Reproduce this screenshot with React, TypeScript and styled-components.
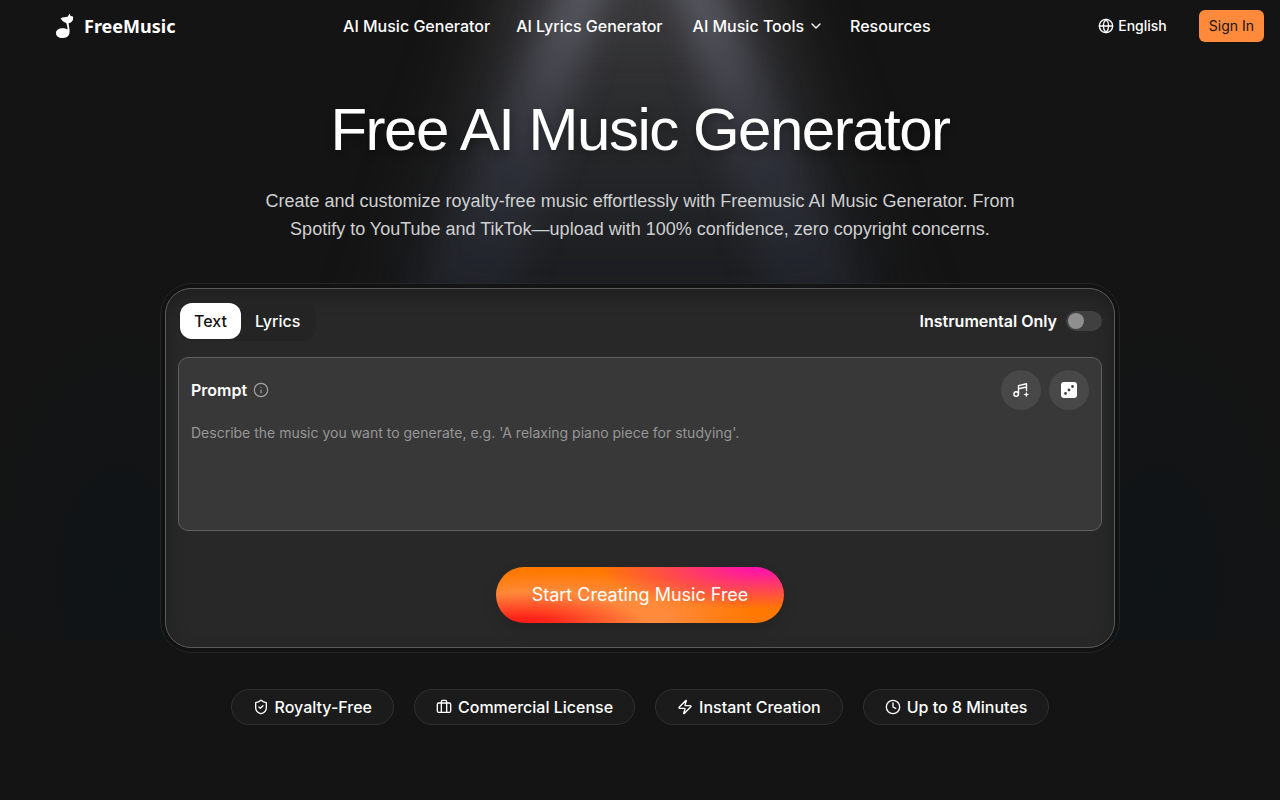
import React, { useState } from "react";
import styled, { createGlobalStyle } from "styled-components";
import {
  Briefcase,
  ChevronDown,
  Clock,
  Globe,
  Info,
  ShieldCheck,
  Zap,
} from "lucide-react";

const ui = `Inter, "Noto Sans", sans-serif`;
const display = `"Liberation Sans", Arial, sans-serif`;

const GlobalStyle = createGlobalStyle`
  *, *::before, *::after { box-sizing: border-box; }
  body {
    margin: 0;
    background: #141414;
    color: #ffffff;
    font-family: ${ui};
  }
  button, input, textarea { font: inherit; color: inherit; }
  button { cursor: pointer; border: 0; padding: 0; }
  h1, p, ul { margin: 0; padding: 0; }
`;

const Page = styled.div`
  position: relative;
  min-height: 100vh;
  overflow: hidden;
`;

const Backdrop = styled.svg`
  position: absolute;
  top: 0;
  left: 0;
  width: 100%;
  height: 640px;
  pointer-events: none;
`;

const Content = styled.div`
  position: relative;
`;

const Header = styled.header`
  display: flex;
  align-items: center;
  justify-content: space-between;
  height: 52px;
  padding: 0 16px 0 56px;
`;

const Logo = styled.a`
  display: flex;
  align-items: center;
  gap: 10px;
  color: #ffffff;
  text-decoration: none;
  font: 700 18px/24px "Noto Sans", sans-serif;
`;

const Nav = styled.nav`
  display: flex;
  align-items: center;
  gap: 26px;
`;

const NavLink = styled.a<{ $menu?: boolean }>`
  display: flex;
  align-items: center;
  gap: 4px;
  padding-left: ${(p) => (p.$menu ? "4px" : "0")};
  color: #ffffff;
  text-decoration: none;
  font-size: 16px;
  line-height: 24px;
  font-weight: 500;
`;

const HeaderActions = styled.div`
  display: flex;
  align-items: center;
  gap: 32px;
`;

const LanguageButton = styled.button`
  display: flex;
  align-items: center;
  gap: 4px;
  background: none;
  font-size: 14px;
  line-height: 20px;
  font-weight: 500;
`;

const SignIn = styled.button`
  height: 32px;
  padding: 0 10px;
  border-radius: 6px;
  background: #ff8a3c;
  color: #141414;
  font-size: 14px;
  line-height: 20px;
`;

const Main = styled.main`
  display: flex;
  flex-direction: column;
  align-items: center;
  padding: 48px 24px;
`;

const Title = styled.h1`
  font: 400 60px/60px ${display};
  letter-spacing: -0.025em;
  text-align: center;
  text-shadow: 0 4px 8px rgba(0, 0, 0, 0.3);
`;

const Intro = styled.p`
  max-width: 768px;
  margin-top: 27px;
  color: #cfd0d2;
  font: 400 18px/28px ${display};
  text-align: center;
`;

const Frame = styled.section`
  width: 100%;
  max-width: 960px;
  margin-top: 40px;
  padding: 4px;
  border: 1px solid #252525;
  border-radius: 32px;
  background: rgba(18, 18, 18, 0.8);
`;

const Card = styled.form`
  display: flex;
  flex-direction: column;
  padding: 12px 12px 24px;
  border: 1px solid #5a5a5a;
  border-radius: 26px;
  background: #282828;
  box-shadow: inset 0 8px 16px rgba(24, 24, 24, 0.5);
`;

const CardTop = styled.div`
  display: flex;
  align-items: center;
  justify-content: space-between;
`;

const Tabs = styled.div`
  display: flex;
  padding: 2px;
  border-radius: 14px;
  background: #242424;
`;

const Tab = styled.button<{ $active: boolean }>`
  height: 36px;
  padding: 0 14px;
  border-radius: 12px;
  background: ${(p) => (p.$active ? "#ffffff" : "transparent")};
  color: ${(p) => (p.$active ? "#141414" : "#ffffff")};
  font-size: 16px;
  line-height: 24px;
  font-weight: 500;
`;

const SwitchLabel = styled.label`
  display: flex;
  align-items: center;
  gap: 9px;
  font-size: 16px;
  line-height: 24px;
  font-weight: 600;
`;

const Switch = styled.input`
  appearance: none;
  display: flex;
  align-items: center;
  width: 36px;
  height: 20px;
  margin: 0;
  padding: 2px;
  border-radius: 10px;
  background: #404040;
  cursor: pointer;

  &::before {
    content: "";
    width: 16px;
    height: 16px;
    border-radius: 50%;
    background: #8f8f8f;
  }

  &:checked {
    justify-content: flex-end;
    background: #ff8a3c;
  }
`;

const PromptBox = styled.div`
  display: flex;
  flex-direction: column;
  margin-top: 16px;
  padding: 12px;
  border: 1px solid #606060;
  border-radius: 10px;
  background: #383838;
`;

const PromptHead = styled.div`
  display: flex;
  align-items: center;
  justify-content: space-between;
`;

const PromptTitle = styled.div`
  display: flex;
  align-items: center;
  gap: 6px;
  font-size: 16px;
  line-height: 24px;
  font-weight: 600;

  svg {
    color: #a3a3a3;
  }
`;

const RoundButtons = styled.div`
  display: flex;
  gap: 8px;
`;

const RoundButton = styled.button`
  display: flex;
  align-items: center;
  justify-content: center;
  width: 40px;
  height: 40px;
  border-radius: 50%;
  background: #484848;
`;

const PromptInput = styled.textarea`
  width: 100%;
  height: 108px;
  padding: 12px 0;
  border: 0;
  outline: 0;
  resize: none;
  background: none;
  font-size: 14px;
  line-height: 22px;

  &::placeholder {
    color: #969696;
    opacity: 1;
  }
`;

const StartButton = styled.button`
  align-self: center;
  height: 56px;
  margin-top: 36px;
  padding: 0 36px;
  border-radius: 28px;
  background:
    radial-gradient(ellipse 56% 75% at 92% 0%, #ff0fb0 0%, rgba(255, 15, 176, 0.85) 18%, rgba(255, 15, 176, 0) 100%),
    radial-gradient(ellipse 42% 60% at 10% 105%, #ff1414 0%, rgba(255, 20, 20, 0.85) 25%, rgba(255, 20, 20, 0) 100%),
    radial-gradient(ellipse 68% 80% at 22% 88%, #ff8a3c 0%, #ff8a3c 55%, #ff7800 100%);
  box-shadow: 0 8px 16px rgba(0, 0, 0, 0.12);
  font-size: 18px;
  line-height: 28px;
`;

const Features = styled.ul`
  display: flex;
  flex-wrap: wrap;
  justify-content: center;
  gap: 20px;
  margin-top: 36px;
  list-style: none;
`;

const Feature = styled.li`
  display: flex;
  align-items: center;
  gap: 6px;
  height: 36px;
  padding: 0 21px;
  border: 1px solid #303030;
  border-radius: 18px;
  background: #1b1b1b;
  font-size: 16px;
  line-height: 24px;
  font-weight: 500;
`;

const StageLights = () => (
  <Backdrop viewBox="0 0 1280 640" preserveAspectRatio="none" aria-hidden="true">
    <defs>
      <linearGradient id="beam" gradientUnits="userSpaceOnUse" x1="0" y1="0" x2="0" y2="400">
        <stop offset="0" stopColor="#8a8a9e" stopOpacity="0.4" />
        <stop offset="0.2" stopColor="#80809a" stopOpacity="0.26" />
        <stop offset="0.4" stopColor="#5a6484" stopOpacity="0.18" />
        <stop offset="0.7" stopColor="#3c4c68" stopOpacity="0.14" />
        <stop offset="1" stopColor="#33405c" stopOpacity="0" />
      </linearGradient>
      <linearGradient id="wash" gradientUnits="userSpaceOnUse" x1="0" y1="0" x2="0" y2="420">
        <stop offset="0" stopColor="#77777c" stopOpacity="0.4" />
        <stop offset="0.3" stopColor="#6c6e76" stopOpacity="0.24" />
        <stop offset="0.65" stopColor="#50586a" stopOpacity="0.16" />
        <stop offset="1" stopColor="#303848" stopOpacity="0" />
      </linearGradient>
      <radialGradient id="side">
        <stop offset="0" stopColor="#0e1518" stopOpacity="0.7" />
        <stop offset="1" stopColor="#0e1518" stopOpacity="0" />
      </radialGradient>
      <filter id="soft" x="-50%" y="-20%" width="200%" height="140%" colorInterpolationFilters="sRGB">
        <feGaussianBlur stdDeviation="16" />
      </filter>
      <filter id="softer" x="-50%" y="-20%" width="200%" height="140%" colorInterpolationFilters="sRGB">
        <feGaussianBlur stdDeviation="36" />
      </filter>
    </defs>
    <ellipse cx="120" cy="580" rx="140" ry="260" fill="url(#side)" />
    <ellipse cx="1160" cy="580" rx="140" ry="260" fill="url(#side)" />
    <path d="M550-100H730L950 440H330Z" fill="url(#wash)" filter="url(#softer)" />
    <g filter="url(#soft)">
      <path d="M586-60H618L486 400H364Z" fill="url(#beam)" />
      <path d="M662-60H694L916 400H794Z" fill="url(#beam)" />
    </g>
  </Backdrop>
);

const LogoMark = () => (
  <svg width="18" height="26" viewBox="0 0 18 26" fill="#fff" aria-hidden="true">
    <path d="M4.500 5.200C6.800 4.400 9.800 4.300 12 3.600L13.400 0.600L14.600 3L17 3.600C17.400 6 17 8.300 14.800 9.400C14 9.800 13.200 9.900 12.600 10.200C12.700 13.500 14.300 16.500 13.400 20.400C12.700 23.600 9.800 25 6.300 25C2.800 25 0 23.100 0 20.200C0 17.200 3 15.300 6.300 15.300C8.300 15.300 10.300 15.800 11.500 16.600C11.600 14 10.900 12 10.200 9.900C7.800 9.200 5.600 7.400 4.500 5.200Z" />
  </svg>
);

const ComposeIcon = () => (
  <svg width="18" height="18" viewBox="0 0 18 18" fill="none" stroke="#fff" strokeWidth="1.4" strokeLinecap="round" strokeLinejoin="round" aria-hidden="true">
    <circle cx="4.200" cy="13" r="2.300" />
    <path d="M6.500 13V4.600L14.500 2.800V9.500M6.500 7.800L14.500 6" />
    <path d="M14.300 10.600L15.100 12.700L17.200 13.500L15.100 14.300L14.300 16.400L13.500 14.300L11.400 13.500L13.500 12.700Z" fill="#fff" stroke="none" />
  </svg>
);

const DiceIcon = () => (
  <svg width="16" height="16" viewBox="0 0 16 16" aria-hidden="true">
    <rect width="16" height="16" rx="3" fill="#fff" />
    <g fill="#404040">
      <circle cx="11.500" cy="4.500" r="1.400" />
      <circle cx="8" cy="8" r="1.400" />
      <circle cx="4.500" cy="11.500" r="1.400" />
    </g>
  </svg>
);

const tabs = ["Text", "Lyrics"];

const features = [
  { icon: ShieldCheck, label: "Royalty-Free" },
  { icon: Briefcase, label: "Commercial License" },
  { icon: Zap, label: "Instant Creation" },
  { icon: Clock, label: "Up to 8 Minutes" },
];

export default function App() {
  const [tab, setTab] = useState("Text");

  return (
    <Page>
      <GlobalStyle />
      <StageLights />
      <Content>
        <Header>
          <Logo href="#">
            <LogoMark />
            FreeMusic
          </Logo>
          <Nav>
            <NavLink href="#">AI Music Generator</NavLink>
            <NavLink href="#">AI Lyrics Generator</NavLink>
            <NavLink href="#" $menu>
              AI Music Tools
              <ChevronDown size={16} />
            </NavLink>
            <NavLink href="#">Resources</NavLink>
          </Nav>
          <HeaderActions>
            <LanguageButton type="button">
              <Globe size={16} />
              English
            </LanguageButton>
            <SignIn type="button">Sign In</SignIn>
          </HeaderActions>
        </Header>
        <Main>
          <Title>Free AI Music Generator</Title>
          <Intro>
            Create and customize royalty-free music effortlessly with Freemusic AI Music Generator.
            From Spotify to YouTube and TikTok—upload with 100% confidence, zero copyright concerns.
          </Intro>
          <Frame>
            <Card onSubmit={(e) => e.preventDefault()}>
              <CardTop>
                <Tabs role="tablist">
                  {tabs.map((name) => (
                    <Tab
                      key={name}
                      type="button"
                      role="tab"
                      aria-selected={tab === name}
                      $active={tab === name}
                      onClick={() => setTab(name)}
                    >
                      {name}
                    </Tab>
                  ))}
                </Tabs>
                <SwitchLabel>
                  Instrumental Only
                  <Switch type="checkbox" role="switch" />
                </SwitchLabel>
              </CardTop>
              <PromptBox>
                <PromptHead>
                  <PromptTitle>
                    <label htmlFor="prompt">Prompt</label>
                    <Info size={16} strokeWidth={1.75} />
                  </PromptTitle>
                  <RoundButtons>
                    <RoundButton type="button" aria-label="Inspire me">
                      <ComposeIcon />
                    </RoundButton>
                    <RoundButton type="button" aria-label="Random prompt">
                      <DiceIcon />
                    </RoundButton>
                  </RoundButtons>
                </PromptHead>
                <PromptInput
                  id="prompt"
                  placeholder="Describe the music you want to generate, e.g. 'A relaxing piano piece for studying'."
                />
              </PromptBox>
              <StartButton type="submit">Start Creating Music Free</StartButton>
            </Card>
          </Frame>
          <Features>
            {features.map(({ icon: Icon, label }) => (
              <Feature key={label}>
                <Icon size={16} />
                {label}
              </Feature>
            ))}
          </Features>
        </Main>
      </Content>
    </Page>
  );
}
